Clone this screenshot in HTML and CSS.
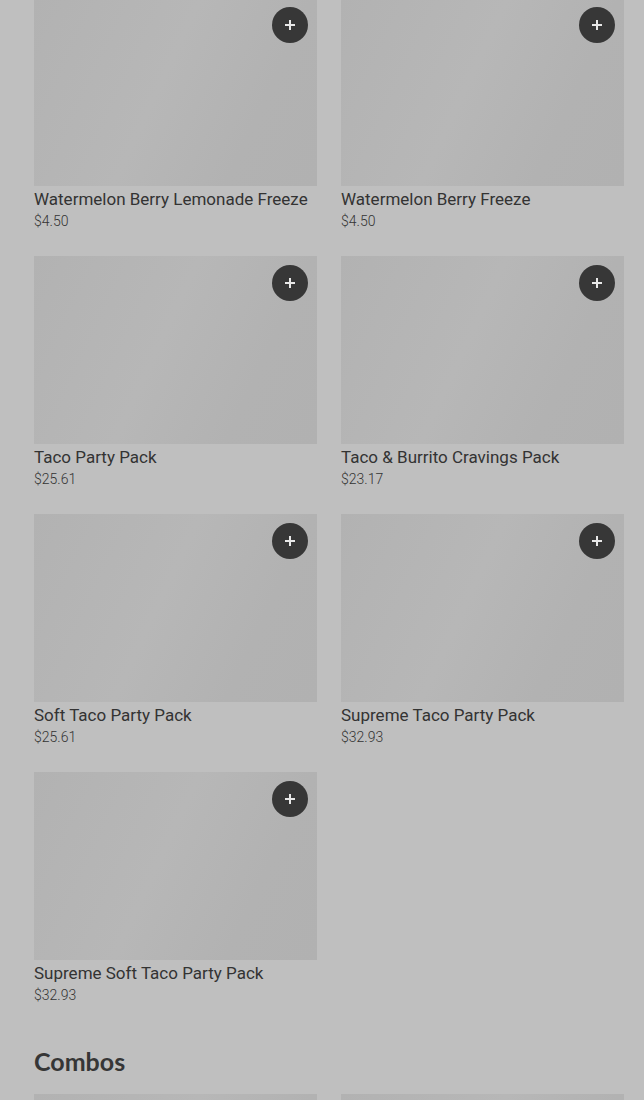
FILE: index.html
```html
<!DOCTYPE html>
<html>
<head>
<meta charset="utf-8">
<link rel="stylesheet" href="styles.css">
</head>
<body>
<main class="page">
  <section class="grid first">
    <div class="card">
      <div class="img"><button class="add"><svg viewBox="0 0 12 12" width="12" height="12"><path d="M6 1v10M1 6h10" stroke="#e8e8e8" stroke-width="2"/></svg></button></div>
      <div class="title">Watermelon Berry Lemonade Freeze</div>
      <div class="price">$4.50</div>
    </div>
    <div class="card">
      <div class="img"><button class="add"><svg viewBox="0 0 12 12" width="12" height="12"><path d="M6 1v10M1 6h10" stroke="#e8e8e8" stroke-width="2"/></svg></button></div>
      <div class="title">Watermelon Berry Freeze</div>
      <div class="price">$4.50</div>
    </div>
    <div class="card">
      <div class="img"><button class="add"><svg viewBox="0 0 12 12" width="12" height="12"><path d="M6 1v10M1 6h10" stroke="#e8e8e8" stroke-width="2"/></svg></button></div>
      <div class="title">Taco Party Pack</div>
      <div class="price">$25.61</div>
    </div>
    <div class="card">
      <div class="img"><button class="add"><svg viewBox="0 0 12 12" width="12" height="12"><path d="M6 1v10M1 6h10" stroke="#e8e8e8" stroke-width="2"/></svg></button></div>
      <div class="title">Taco &amp; Burrito Cravings Pack</div>
      <div class="price">$23.17</div>
    </div>
    <div class="card">
      <div class="img"><button class="add"><svg viewBox="0 0 12 12" width="12" height="12"><path d="M6 1v10M1 6h10" stroke="#e8e8e8" stroke-width="2"/></svg></button></div>
      <div class="title">Soft Taco Party Pack</div>
      <div class="price">$25.61</div>
    </div>
    <div class="card">
      <div class="img"><button class="add"><svg viewBox="0 0 12 12" width="12" height="12"><path d="M6 1v10M1 6h10" stroke="#e8e8e8" stroke-width="2"/></svg></button></div>
      <div class="title">Supreme Taco Party Pack</div>
      <div class="price">$32.93</div>
    </div>
    <div class="card">
      <div class="img"><button class="add"><svg viewBox="0 0 12 12" width="12" height="12"><path d="M6 1v10M1 6h10" stroke="#e8e8e8" stroke-width="2"/></svg></button></div>
      <div class="title">Supreme Soft Taco Party Pack</div>
      <div class="price">$32.93</div>
    </div>
  </section>
  <h2 class="heading">Combos</h2>
  <section class="grid">
    <div class="card"><div class="img"></div></div>
    <div class="card"><div class="img"></div></div>
  </section>
</main>
</body>
</html>
```

FILE: styles.css
```css
html, body {
  margin: 0;
  padding: 0;
  background: #bfbfbf;
  overflow: hidden;
}
.page {
  padding: 0 20px 0 34px;
  margin-top: -2px;
  font-family: Roboto, "Liberation Sans", sans-serif;
  color: #383838;
}
.grid {
  display: grid;
  grid-template-columns: 283px 283px;
  column-gap: 24px;
  row-gap: 24px;
}
.card {
  display: flex;
  flex-direction: column;
}
.img {
  position: relative;
  height: 188px;
  background: linear-gradient(115deg, #b2b2b2 0%, #b7b7b7 45%, #b2b2b2 75%, #b1b1b1 100%);
}
.add {
  position: absolute;
  top: 9px;
  right: 9px;
  width: 36px;
  height: 36px;
  border-radius: 50%;
  border: none;
  padding: 0;
  background: #373737;
  display: flex;
  align-items: center;
  justify-content: center;
}
.title {
  margin-top: 2px;
  font-size: 17px;
  font-weight: 400;
  line-height: 22px;
  white-space: nowrap;
  color: #333;
}
.price {
  margin-top: 1px;
  font-size: 14px;
  font-weight: 300;
  line-height: 21px;
  color: #333;
}
.heading {
  margin: 39px 0 17px;
  font-family: Lato, "Open Sans", sans-serif;
  font-size: 25px;
  font-weight: 700;
  line-height: 32px;
  color: #363636;
}
```
